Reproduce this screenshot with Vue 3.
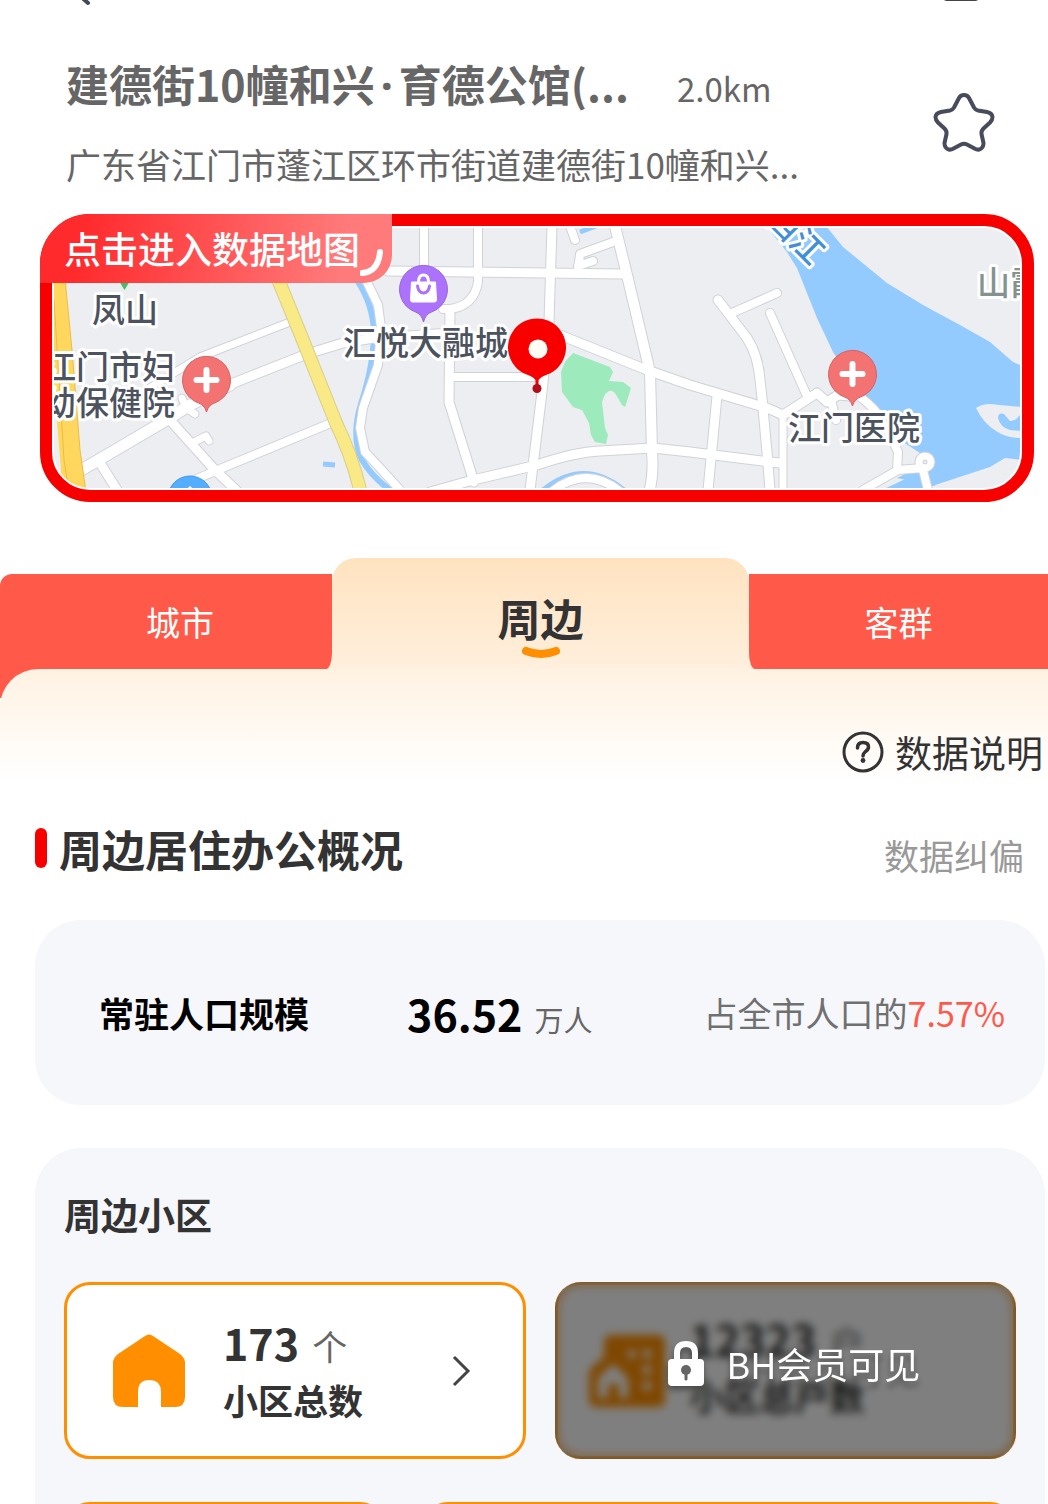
<script setup>
import { ref } from 'vue'

const tabs = ['城市', '周边', '客群']
const active = ref(1)

const roads = [
  { w: 7, d: 'M143 392L200 357L290 322' },
  { w: 9, d: 'M226 386L307 354L343 343L380 337' },
  { w: 11, d: 'M78 472L163 422L190 405L230 385' },
  { w: 9, d: 'M100 463L117 490' },
  { w: 9, d: 'M170 420L213 468L238 492' },
  { w: 8, d: 'M180 486L220 469L331 423' },
  { w: 7, d: 'M192 443L206 436L209 441M182 398L186 408L195 414' },
  { w: 8, d: 'M366 280L378 305L381 328L378 365L363 408L360 428L365 452L380 468L400 490' },
  { w: 8, d: 'M424 226V268M478 226V282Q474 306 450 309H443' },
  { w: 9, d: 'M388 271L623 274M380 338L450 333M450 311L449 402L474 482' },
  { w: 8, d: 'M453 377H536' },
  { w: 9, d: 'M552 226L549 322L542 392L530 490' },
  { w: 10, d: 'M615 226L627 275L650 372L652 452Q654 476 649 492' },
  { w: 9, d: 'M560 335L647 370L690 385L767 408L783 415L817 393L827 402L838 395L850 396' },
  { w: 9, d: 'M430 492L473 480L537 465Q575 452 600 451L653 448L690 452L770 462L780 463' },
  { w: 8, d: 'M570 226L575 240M613 242L580 254L578 270M578 266L593 261' },
  { w: 9, d: 'M718 300L747 338Q758 355 760 380L762 398L767 452L770 490' },
  { w: 8, d: 'M732 313L777 293M770 313L807 396' },
  { w: 9, d: 'M717 396L708 490' },
  { w: 7, d: 'M783 416V490' },
  { w: 8, d: 'M860 397Q876 409 880 418L890 435L898 452L897 470L923 468M898 470L863 490M923 470L928 490M832 404L836 420' },
  { w: 8, d: 'M550 493Q586 463 622 493' },
]
</script>

<template>
  <div class="page">
    <div class="topbar">
      <svg width="16" height="8" viewBox="0 0 16 8" aria-hidden="true">
        <path d="M4 -5L13 3" fill="none" stroke="#43475a" stroke-width="4" stroke-linecap="round" />
      </svg>
      <svg width="40" height="8" viewBox="0 0 40 8" aria-hidden="true">
        <rect x="1" y="-16" width="38" height="17" rx="5" fill="#444" />
      </svg>
    </div>

    <header class="place">
      <div class="place-info">
        <div class="place-name">
          <h1>建德街10幢和兴<span class="dot">·</span>育德公馆(...</h1>
          <span class="distance">2.0km</span>
        </div>
        <p class="address">广东省江门市蓬江区环市街道建德街10幢和兴...</p>
      </div>
      <button class="star" aria-label="收藏">
        <svg width="64" height="64" viewBox="0 0 64 64">
          <path d="M32 4Q35.500 4 37 7L42 16.500Q43.500 19 46 19.500L55 21Q60 22 60.500 26Q60.500 29 58 31.500L51.500 37.500Q49 40 49.500 43L51.500 52Q51.500 57 47.500 58.500Q45 59 42.500 57.500L35 53.500Q32 52 29 53.500L21.500 57.500Q19 59 16.500 58.500Q12.500 57 12.500 52L14.500 43Q15 40 12.500 37.500L6 31.500Q3.500 29 3.500 26Q4 22 9 21L18 19.500Q20.500 19 22 16.500L27 7Q28.500 4 32 4Z" fill="none" stroke="#474b5c" stroke-width="4" />
        </svg>
      </button>
    </header>

    <a href="#map" class="map">
      <svg class="map-canvas" viewBox="54 228 966 260" preserveAspectRatio="xMidYMid slice" role="img" aria-label="地图">
        <rect x="0" y="200" width="1100" height="320" fill="#eceef1" />
        <path d="M766 226L787 252L797 268L817 318L833 352L860 392L880 418L903 442L920 453L935 465L882 490H920L990 467L1005 458L1022 460V366L1013 362L990 342L960 325L923 305L887 283L843 247L826 226Z" fill="#94cbff" />
        <path d="M935 465L905 474L897 478L935 486Z" fill="#94cbff" />
        <path d="M976 408Q982 404 990 404L1022 407V412Q1016 422 1010 421L1004 414Q998 412 998 418Q1000 427 1010 430L1022 431V438Q1006 438 996 431Q983 423 976 408Z" fill="#eceef1" />
        <path d="M357 280Q373 304 374 332Q374 364 361 404Q351 437 362 460Q374 480 396 494" fill="none" stroke="#94cbff" stroke-width="6" />
        <path d="M323 464L335 465M580 232L596 226" fill="none" stroke="#94cbff" stroke-width="5" />
        <path d="M543 490Q584 457 624 490" fill="none" stroke="#94cbff" stroke-width="5" />
        <path d="M573 353L610 367L613 372L609 381L623 382L631 388L625 407L622 405L615 393Q607 386 602 402L605 428L608 435L606 444L595 442L591 435L589 423L582 410L573 407L562 392L561 372L565 362Z" fill="#9debbd" />
        <g fill="none" stroke-linejoin="round" stroke-linecap="round">
          <path v-for="(r, i) in roads" :key="'c' + i" :d="r.d" stroke="#cfd2d9" :stroke-width="r.w + 2" />
          <circle cx="925" cy="462" r="6" stroke="#cfd2d9" stroke-width="9" />
          <path v-for="(r, i) in roads" :key="'r' + i" :d="r.d" stroke="#fff" :stroke-width="r.w" />
          <circle cx="925" cy="462" r="6" stroke="#fff" stroke-width="7" />
        </g>
        <path d="M50 226H62Q65 290 72 350L80 450L86 492H60L61 470L50 340Z" fill="#ffd75e" />
        <path d="M62 226Q65 290 72 350L80 450L86 492M54 300L64 460L69 492" fill="none" stroke="#edbd3d" stroke-width="1" />
        <path d="M262 240L302 338L336 423Q353 458 361 494" fill="none" stroke="#d8cf88" stroke-width="14" />
        <path d="M262 240L302 338L336 423Q353 458 361 494" fill="none" stroke="#f9e987" stroke-width="12" />
        <path d="M119 281L124.500 290L130 281Z" fill="#45bd68" />
        <circle cx="190" cy="498" r="22" fill="#55adff" stroke="#3c94ed" />
        <path d="M186 490L190 486L194 490Z" fill="#fff" />

        <g class="labels">
          <text x="92" y="322">凤山</text>
          <text x="43" y="379">江门市妇</text>
          <text x="43" y="415">幼保健院</text>
          <text x="343" y="355">汇悦大融城</text>
          <text x="788" y="440">江门医院</text>
          <text x="977" y="295" fill="#84938f">山霞</text>
          <text x="764" y="220" fill="#438fd6" transform="rotate(45 764 220)">西江</text>
        </g>

        <g v-for="p in [{ x: 206.5, y: 380 }, { x: 852.5, y: 374 }]" :key="p.x" :transform="`translate(${p.x} ${p.y})`">
          <path d="M0 32Q-2 25 -8 23A24 24 0 1 1 8 23Q2 25 0 32Z" fill="#f37272" stroke="#d96161" />
          <path d="M0 -10V10M-10 0H10" stroke="#fff" stroke-width="6" stroke-linecap="round" />
        </g>
        <g transform="translate(423.500 289)">
          <path d="M0 33Q-2 25 -8 23A24 24 0 1 1 8 23Q2 25 0 33Z" fill="#ac72fb" stroke="#9866da" />
          <path d="M-12 -7H12L13 11Q13 13 11 13H-11Q-13 13 -13 11Z" fill="#fff" stroke="#fff" stroke-linejoin="round" />
          <path d="M-5 -7Q-5 -14 0 -14Q5 -14 5 -7" fill="none" stroke="#fff" stroke-width="3" />
          <path d="M-6 -3Q-5 4 0 4Q5 4 6 -3" fill="none" stroke="#ac72fb" stroke-width="3" stroke-linecap="round" />
        </g>
        <path d="M537 382Q534 377 528 375A29 29 0 1 1 546 375Q540 377 537 382Z" fill="#f80000" />
        <circle cx="538" cy="349" r="9.500" fill="#fffdf4" />
        <path d="M537 376V386" stroke="#f80000" stroke-width="3" />
        <circle cx="537" cy="388.500" r="4.500" fill="#b20d18" />
      </svg>
      <span class="map-banner">
        点击进入数据地图
        <svg width="24" height="30" viewBox="0 0 24 30" aria-hidden="true">
          <path d="M2 24Q18 23 20 3" fill="none" stroke="#fff" stroke-width="6" stroke-linecap="round" />
        </svg>
      </span>
    </a>

    <nav class="tabs">
      <button v-for="(t, i) in tabs" :key="t" class="tab" :class="{ active: i === active }" @click="active = i">
        {{ t }}
        <svg v-if="i === active" class="smile" width="40" height="14" viewBox="0 0 40 14" aria-hidden="true">
          <path d="M5 5Q20 11 35 5" fill="none" stroke="#ff8f00" stroke-width="8" stroke-linecap="round" />
        </svg>
      </button>
    </nav>

    <div class="panel-wrap">
      <main class="panel">
        <a href="#explain" class="explain">
          <svg width="42" height="42" viewBox="0 0 42 42" aria-hidden="true">
            <circle cx="21" cy="21" r="19" fill="none" stroke="#333" stroke-width="3" />
            <path d="M15.500 17Q15.500 11.500 21 11.500Q26.500 11.500 26.500 16Q26.500 18.500 23.500 20.500Q21 22.500 21 25" fill="none" stroke="#333" stroke-width="3.500" stroke-linecap="round" />
            <circle cx="21" cy="29.500" r="2.400" fill="#333" />
          </svg>
          数据说明
        </a>

        <div class="section-head">
          <h2>周边居住办公概况</h2>
          <a href="#correct">数据纠偏</a>
        </div>

        <section class="card population">
          <strong class="pop-label">常驻人口规模</strong>
          <span class="pop-value"><b>36.52</b><small>万人</small></span>
          <span class="pop-share">占全市人口的<em>7.57%</em></span>
        </section>

        <section class="card communities">
          <h3>周边小区</h3>
          <div class="tiles">
            <button class="tile">
              <svg class="tile-icon" width="72" height="74" viewBox="0 0 72 74" aria-hidden="true">
                <path d="M32 2Q36 -1 40 2L67 20Q72 24 72 29V63Q72 73 62 73H48V58Q48 46 36 46Q25 46 25 58V73H10Q0 73 0 63V29Q0 24 5 20Z" fill="#ff8f00" />
              </svg>
              <span class="tile-text">
                <span class="tile-value"><b>173</b><small>个</small></span>
                <span class="tile-label">小区总数</span>
              </span>
              <svg class="arrow" width="20" height="32" viewBox="0 0 20 32" aria-hidden="true">
                <path d="M3 2L17 16L3 30" fill="none" stroke="#444" stroke-width="3" />
              </svg>
            </button>
            <button class="tile locked">
              <svg class="tile-icon" width="78" height="74" viewBox="0 0 78 74" aria-hidden="true">
                <path d="M16 8Q16 1 23 1H70Q77 1 77 8V66Q77 73 70 73H8Q1 73 1 66V40Q1 36 4 33L16 23Z" fill="#ff8f00" />
                <path d="M10 64V44L25 30L40 44V64H31V50H20V64Z" fill="#fff" />
                <path d="M40 16h7v8h-7zM55 16h8v8h-8zM55 32h8v8h-8zM55 48h8v8h-8z" fill="#fff" />
              </svg>
              <span class="tile-text">
                <span class="tile-value"><b>12323</b><small>户</small></span>
                <span class="tile-label">小区总户数</span>
              </span>
              <span class="veil">
                <svg width="38" height="48" viewBox="0 0 38 48" aria-hidden="true">
                  <path d="M10 22V14Q10 5 19 5Q28 5 28 14V22" fill="none" stroke="#fff" stroke-width="6" />
                  <rect x="1" y="20" width="36" height="27" rx="4" fill="#fff" />
                  <circle cx="19" cy="31" r="5" fill="#666" />
                  <path d="M19 32V40" stroke="#666" stroke-width="3" stroke-linecap="round" />
                </svg>
                BH会员可见
              </span>
            </button>
          </div>
          <div class="tiles next">
            <div class="tile"></div>
            <div class="tile"></div>
          </div>
        </section>
      </main>
    </div>
  </div>
</template>

<style>
body {
  margin: 0;
  background: #fff;
}
</style>

<style scoped>
* {
  box-sizing: border-box;
}
h1, h2, h3, p {
  margin: 0;
}
button {
  margin: 0;
  padding: 0;
  border: 0;
  background: none;
  font: inherit;
  color: inherit;
  text-align: left;
}
a {
  color: inherit;
  text-decoration: none;
}
svg {
  display: block;
  flex: none;
}
em {
  font-style: normal;
}
small {
  line-height: 1;
}
.page {
  height: 100vh;
  overflow: hidden;
  font-family: "Noto Sans CJK SC", "Noto Sans", sans-serif;
  color: #333;
  white-space: nowrap;
}
.topbar {
  display: flex;
  justify-content: space-between;
  height: 56px;
  padding: 0 67px 0 75px;
}
.place {
  display: flex;
  justify-content: space-between;
  align-items: center;
  padding: 0 52px 0 66px;
  color: #666;
}
.place-name {
  display: flex;
  align-items: baseline;
  gap: 48px;
  height: 54px;
}
h1 {
  font-size: 43px;
  line-height: 54px;
}
.dot {
  padding: 0 6px;
  font-family: "Noto Sans", sans-serif;
  line-height: 1;
}
.distance {
  font-size: 33px;
  line-height: 40px;
}
.address {
  margin-top: 29px;
  font-size: 35px;
  line-height: 50px;
}
.map {
  display: block;
  position: relative;
  margin: 25px 14px 0 40px;
  border: 12px solid #f60000;
  border-radius: 50px;
  padding: 2px;
  background: #fff;
}
.map-canvas {
  width: 100%;
  height: 260px;
  border-radius: 36px;
}
.labels {
  font-size: 33px;
  font-weight: 500;
  fill: #4c535e;
  stroke: #fff;
  stroke-width: 6px;
  stroke-linejoin: round;
  paint-order: stroke;
}
.map-banner {
  position: absolute;
  left: -12px;
  top: -12px;
  display: flex;
  align-items: flex-end;
  height: 69px;
  padding: 0 8px 4px 24px;
  border-radius: 50px 0 28px 0;
  background: linear-gradient(100deg, #ff2a2c 12%, #ff7a7a 85%);
  color: #fff;
  font-size: 37px;
  font-weight: 500;
  line-height: 62px;
}
.tabs {
  display: grid;
  grid-template-columns: 332fr 417fr 299fr;
  align-items: end;
  height: 111px;
  margin-top: 56px;
  background: linear-gradient(#ffefdd, #ffefdd) bottom / 100% 16px no-repeat;
}
.tab {
  height: 95px;
  background: #ff5a49;
  color: #fff;
  font-size: 34px;
  text-align: center;
}
.tab:first-child {
  padding-left: 28px;
  border-radius: 12px 0 6px 0 / 12px 0 16px 0;
}
.tab:last-child {
  border-radius: 0 0 0 6px / 0 0 0 16px;
}
.tab.active {
  position: relative;
  height: 111px;
  padding-top: 6px;
  background: linear-gradient(#ffe3c0, #ffefdd);
  border-radius: 24px 24px 0 0;
  color: #333;
  font-size: 43px;
  font-weight: 700;
}
.smile {
  position: absolute;
  left: 50%;
  margin-left: -20px;
  bottom: 9px;
}
.panel-wrap {
  background: linear-gradient(#ff5a49, #ff5a49) 0 0 / 40px 29px no-repeat;
}
.panel {
  padding: 60px 3px 0 35px;
  border-radius: 38px 0 0 0;
  background: linear-gradient(#fff2e2, #fff 112px);
}
.explain {
  display: flex;
  align-items: center;
  justify-content: flex-end;
  gap: 11px;
  padding-right: 2px;
  font-size: 37px;
  line-height: 46px;
}
.section-head {
  display: flex;
  justify-content: space-between;
  align-items: flex-end;
  margin-top: 46px;
  padding-right: 21px;
}
h2 {
  display: flex;
  align-items: center;
  gap: 12px;
  font-size: 43px;
  line-height: 54px;
}
h2::before {
  content: "";
  width: 12px;
  height: 40px;
  border-radius: 6px;
  background: #f60000;
}
.section-head a {
  font-size: 35px;
  line-height: 40px;
  color: #999;
}
.card {
  border-radius: 46px;
  background: #f6f7fb;
}
.population {
  display: flex;
  align-items: center;
  height: 185px;
  margin-top: 45px;
  padding: 0 40px 0 64px;
}
.pop-label {
  margin-right: 98px;
  font-size: 35px;
}
.pop-label,
.pop-value b {
  color: #000;
}
.pop-value b,
.tile-value b {
  font-size: 43px;
}
.pop-value small {
  margin-left: 12px;
  font-size: 29px;
  color: #666;
}
.pop-share {
  margin-left: auto;
  font-size: 34px;
  color: #707070;
}
.pop-share em {
  color: #ff5a49;
}
.communities {
  margin-top: 43px;
  padding: 40px 29px;
}
h3 {
  font-size: 37px;
  line-height: 52px;
}
.tiles {
  display: grid;
  grid-template-columns: 1fr 1fr;
  gap: 29px;
  margin-top: 42px;
}
.tiles.next {
  grid-template-columns: 322fr 594fr;
  gap: 36px;
  margin-top: 43px;
}
.tile {
  position: relative;
  display: flex;
  align-items: center;
  height: 177px;
  padding: 0 52px 0 46px;
  border: 3px solid #ff8f00;
  border-radius: 26px;
  background: #fff;
}
.tile-text {
  display: flex;
  flex-direction: column;
  margin-left: 38px;
}
.tile-value,
.tile-label {
  height: 58px;
  line-height: 58px;
}
.tile-value small {
  margin-left: 13px;
  font-size: 35px;
  color: #666;
}
.tile-label {
  font-size: 35px;
  font-weight: 700;
}
.arrow {
  margin-left: auto;
}
.locked {
  padding-left: 30px;
}
.locked .tile-text {
  margin: 0 0 8px 24px;
}
.veil {
  position: absolute;
  inset: -3px;
  display: flex;
  align-items: center;
  gap: 22px;
  padding: 0 0 16px 112px;
  border-radius: 26px;
  background: rgba(0, 0, 0, 0.5);
  backdrop-filter: blur(4px);
  color: #fff;
  font-size: 36px;
  text-shadow: 0 6px 6px rgba(0, 0, 0, 0.4);
}
.veil svg {
  filter: drop-shadow(0 4px 3px rgba(0, 0, 0, 0.4));
}
</style>
